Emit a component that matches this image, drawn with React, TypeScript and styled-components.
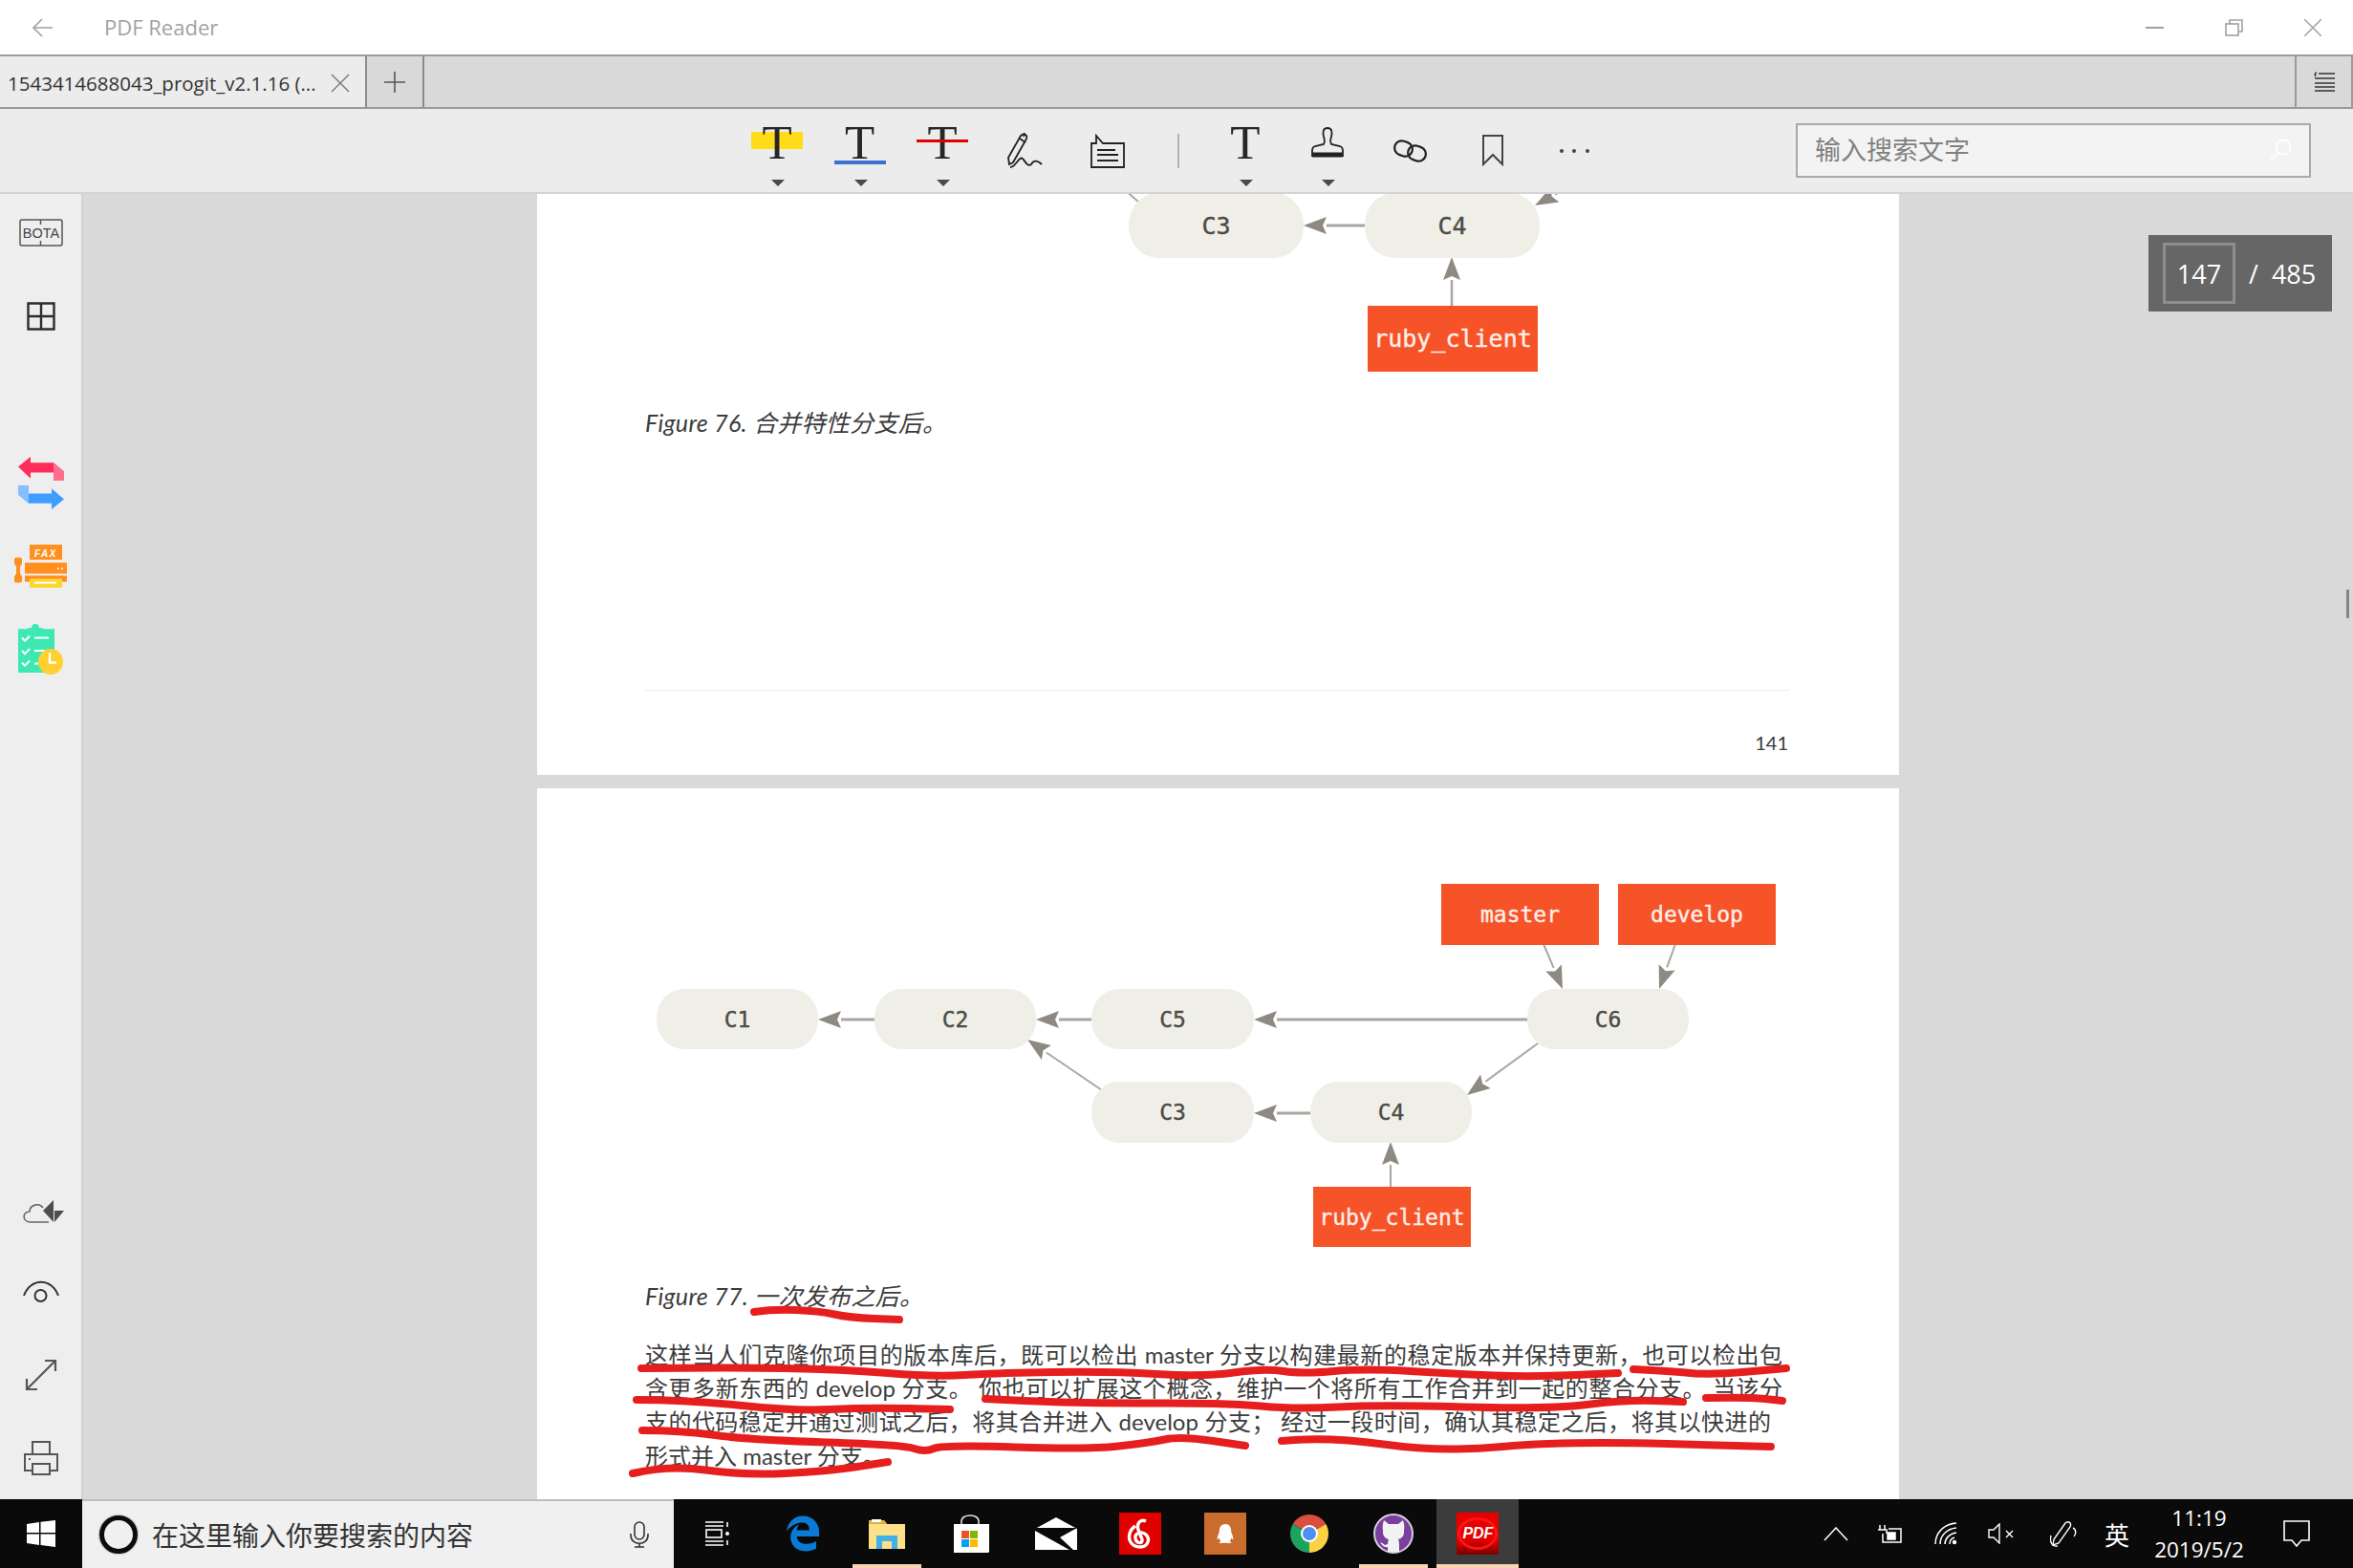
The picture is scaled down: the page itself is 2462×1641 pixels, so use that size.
import React from 'react';
import styled, { createGlobalStyle, css } from 'styled-components';
import { FaQq } from 'react-icons/fa';
import { FaEdgeLegacy } from 'react-icons/fa6';

const UI_FONT = '"Open Sans", "Noto Sans CJK SC", sans-serif';
const DOC_FONT = 'Lato, "Noto Sans CJK SC", sans-serif';

//Global
const GlobalStyle = createGlobalStyle`
    html, body {
        margin: 0;
        padding: 0;
        background: #d9d9d9;
        overflow: hidden;
    }
    * { box-sizing: border-box; }
`;

const Shell = styled.div`
    width: 2462px;
    height: 1641px;
    display: flex;
    flex-direction: column;
    font-family: ${UI_FONT};
    overflow: hidden;
`;

//Title bar
const TitleBar = styled.header`
    height: 57px;
    flex: none;
    background: #fff;
    display: flex;
    align-items: center;
    padding: 0 33px;
    color: #a2a2a2;
`;

const AppTitle = styled.span`
    margin-left: 54px;
    margin-bottom: 2px;
    font-size: 22px;
`;

const WindowButtons = styled.div`
    margin-left: auto;
    display: flex;
    gap: 64px;
    align-items: center;
`;

//Tabs
const TabBar = styled.div`
    height: 57px;
    flex: none;
    background: #d9d9d9;
    border-top: 2px solid #9a9a9a;
    border-bottom: 2px solid #9a9a9a;
    display: flex;
`;

const Tab = styled.div`
    width: 384px;
    background: #ececec;
    border-right: 2px solid #8c8c8c;
    display: flex;
    align-items: center;
    justify-content: space-between;
    padding: 2px 16px 0 8px;
    font-size: 20.5px;
    color: #333;
    white-space: nowrap;
`;

const AddTab = styled.div`
    width: 60px;
    border-right: 2px solid #8c8c8c;
    display: flex;
    align-items: center;
    justify-content: center;
`;

const TabMenu = styled.div`
    margin-left: auto;
    width: 61px;
    border-left: 2px solid #9a9a9a;
    border-right: 2px solid #9a9a9a;
    display: flex;
    align-items: center;
    justify-content: center;
`;

//Toolbar
const Toolbar = styled.div`
    height: 89px;
    flex: none;
    background: #ececec;
    border-bottom: 2px solid #d4d4d4;
    display: flex;
    align-items: center;
    padding-left: 770px;
    padding-right: 44px;
`;

const ToolItem = styled.div`
    width: 86.4px;
    height: 87px;
    flex: none;
    position: relative;
    display: flex;
    align-items: center;
    justify-content: center;
`;

const Caret = styled.i`
    position: absolute;
    bottom: 6px;
    left: 50%;
    margin-left: -6px;
    border-left: 7px solid transparent;
    border-right: 7px solid transparent;
    border-top: 7px solid #4a4a4a;
`;

type Mark = 'yellow' | 'blue' | 'red';

const markStyles = {
    yellow: css`top: 14px; height: 18px; background: #ffdc17; z-index: -1;`,
    blue: css`top: 44px; height: 4px; background: #3a70d0;`,
    red: css`top: 22px; height: 3px; background: #e00000;`,
};

const TextTool = styled.span<{ $mark?: Mark }>`
    position: relative;
    z-index: 0;
    width: 54px;
    height: 51px;
    margin-bottom: 16px;
    font-family: "Liberation Serif", serif;
    font-size: 51px;
    line-height: 51px;
    text-align: center;
    color: #262626;
    &::after {
        content: '';
        position: absolute;
        left: 0;
        right: 0;
        ${p => p.$mark && markStyles[p.$mark]}
    }
`;

const LiftedIcon = styled.span`
    display: flex;
    margin-bottom: 16px;
`;

const ToolDivider = styled.div`
    width: 2px;
    height: 36px;
    flex: none;
    margin: 0 25.6px 0 30px;
    background: #b0b0b0;
`;

const SearchBox = styled.label`
    margin-left: auto;
    width: 539px;
    height: 57px;
    flex: none;
    background: #f3f3f3;
    border: 2px solid #a9a9a9;
    display: flex;
    align-items: center;
    padding: 0 18px 3px;
`;

const SearchInput = styled.input`
    flex: 1;
    min-width: 0;
    border: 0;
    outline: 0;
    background: transparent;
    font-family: ${UI_FONT};
    font-size: 27px;
    padding: 0;
    &::placeholder { color: #808080; opacity: 1; }
`;

//Body of the window
const Main = styled.div`
    flex: 1;
    min-height: 0;
    display: flex;
`;

const Sidebar = styled.nav`
    width: 87px;
    flex: none;
    background: #eee;
    border-right: 2px solid #d2d2d2;
    display: flex;
    flex-direction: column;
`;

const SideGroup = styled.div<{ $gap?: number; $bottom?: boolean }>`
    display: flex;
    flex-direction: column;
    margin-top: ${p => (p.$bottom ? 'auto' : `${p.$gap ?? 0}px`)};
`;

const SideItem = styled.div<{ $h: number; $shift?: number }>`
    height: ${p => p.$h}px;
    padding-left: ${p => p.$shift ?? 0}px;
    display: flex;
    align-items: center;
    justify-content: center;
`;

const Canvas = styled.main`
    flex: 1;
    min-width: 0;
    position: relative;
    overflow: hidden;
    background: #d9d9d9;
    padding-left: 475px;
    display: flex;
    flex-direction: column;
    gap: 14px;
`;

const Page = styled.section<{ $h: number }>`
    width: 1425px;
    height: ${p => p.$h}px;
    flex: none;
    position: relative;
    background: #fff;
    display: flex;
    flex-direction: column;
    padding: 0 114px 0 113px;
    color: #3c3c3c;
    font-family: ${DOC_FONT};
`;

const Figure = styled.svg<{ $h: number }>`
    display: block;
    width: 1425px;
    height: ${p => p.$h}px;
    margin-left: -113px;
    flex: none;
`;

const Caption = styled.p<{ $top: number }>`
    margin: ${p => p.$top}px 0 0;
    font-size: 25px;
    letter-spacing: 0.3px;
    line-height: 32px;
    font-style: italic;
    white-space: nowrap;
`;

const PageFooter = styled.footer`
    margin-top: auto;
    height: 89px;
    border-top: 1px solid #ececec;
    padding-top: 40px;
    text-align: right;
    font-size: 20px;
    line-height: 28px;
    padding-right: 2px;
`;

const Paragraph = styled.div`
    margin-top: 28px;
    font-size: 24px;
    line-height: 35.2px;
`;

const TextLine = styled.div<{ $fit?: boolean; $inset?: number }>`
    white-space: nowrap;
    margin-right: ${p => p.$inset ?? 0}px;
    ${p => p.$fit && css`
        white-space: normal;
        text-align: justify;
        text-align-last: justify;
    `}
`;

const Ink = styled.svg`
    position: absolute;
    left: 0;
    top: 0;
    width: 1425px;
    height: 744px;
    pointer-events: none;
`;

const NodeLabel = styled.text<{ $size: number; $light?: boolean }>`
    font-family: "DejaVu Sans Mono", monospace;
    font-size: ${p => p.$size}px;
    fill: ${p => (p.$light ? '#fdeee8' : '#4c4b45')};
    stroke: ${p => (p.$light ? '#fdeee8' : '#4c4b45')};
    stroke-width: 0.4px;
    text-anchor: middle;
    dominant-baseline: central;
`;

//Page counter
const PageCounter = styled.div`
    position: absolute;
    right: 22px;
    top: 43px;
    width: 192px;
    height: 80px;
    background: #666;
    color: #fff;
    display: flex;
    align-items: center;
    padding-left: 15px;
    font-size: 27px;
`;

const PageInput = styled.div`
    width: 76px;
    height: 64px;
    border: 3px solid #8e8e8e;
    display: flex;
    align-items: center;
    justify-content: center;
`;

const PageTotal = styled.span`
    margin-left: 14px;
    white-space: pre;
`;

const ScrollThumb = styled.div`
    position: absolute;
    right: 4px;
    top: 414px;
    width: 3px;
    height: 30px;
    background: #858585;
`;

//Taskbar
const Taskbar = styled.footer`
    height: 72px;
    flex: none;
    background: #0a0a0a;
    display: flex;
    align-items: center;
    color: #fff;
`;

const StartButton = styled.div`
    width: 86px;
    height: 72px;
    flex: none;
    display: flex;
    align-items: center;
    justify-content: center;
`;

const SearchField = styled.div`
    width: 619px;
    height: 72px;
    flex: none;
    background: #f0f0f0;
    border-top: 2px solid #bdbdbd;
    display: flex;
    align-items: center;
    padding: 0 25px 0 18px;
    color: #333;
    font-size: 28px;
    font-family: "Noto Sans CJK SC", sans-serif;
`;

const Ring = styled.i`
    width: 40px;
    height: 40px;
    border: 5px solid #0c0c0c;
    border-radius: 50%;
    box-shadow: 0 0 2px #666;
    margin-right: 15px;
`;

const MicSlot = styled.span`
    margin-left: auto;
    display: flex;
`;

const TaskView = styled.div`
    width: 91px;
    height: 72px;
    flex: none;
    display: flex;
    align-items: center;
    justify-content: center;
`;

const TaskSlot = styled.div<{ $open?: boolean; $active?: boolean }>`
    width: 86px;
    height: 72px;
    margin: 0 1.15px;
    flex: none;
    position: relative;
    display: flex;
    align-items: center;
    justify-content: center;
    background: ${p => (p.$active ? '#3c3c3c' : 'transparent')};
    ${p => p.$open && css`
        &::after {
            content: '';
            position: absolute;
            bottom: 0;
            left: ${p.$active ? 0 : 7}px;
            right: ${p.$active ? 0 : 7}px;
            height: 4px;
            background: #fcd3b4;
        }
    `}
`;

const SquareTile = styled.div<{ $bg: string }>`
    width: 44px;
    height: 44px;
    background: ${p => p.$bg};
    display: flex;
    align-items: center;
    justify-content: center;
    color: #fff;
`;

const PdfTile = styled.div`
    width: 44px;
    height: 44px;
    background: linear-gradient(#e80000 62%, #7a0000);
    display: flex;
    align-items: center;
    justify-content: center;
    color: #fff;
    font-family: "Liberation Sans", sans-serif;
    font-weight: 700;
    font-style: italic;
    font-size: 16px;
    position: relative;
    &::before {
        content: '';
        position: absolute;
        left: 1px;
        right: 1px;
        top: 5px;
        bottom: 5px;
        border: 3px solid #ff1414;
        border-radius: 50%;
    }
`;

const PdfLabel = styled.span`
    position: relative;
`;

const Tray = styled.div`
    margin-left: auto;
    display: flex;
    align-items: center;
    padding-right: 26px;
`;

const TrayItem = styled.div<{ $w: number }>`
    width: ${p => p.$w}px;
    height: 72px;
    display: flex;
    flex-direction: column;
    align-items: center;
    justify-content: center;
    font-family: "Noto Sans CJK SC", sans-serif;
    font-size: 26px;
`;

const Clock = styled.div`
    display: flex;
    flex-direction: column;
    align-items: center;
    font-family: ${UI_FONT};
    font-size: 22.5px;
    line-height: 33px;
    white-space: nowrap;
`;

//Data
type Point = [number, number];
type Box = { label: string; x: number; y: number; w: number; h: number };
type Link = { from: Point; to: Point; width: number };

const smoothPath = (pts: Point[]) => {
    let d = `M${pts[0][0]} ${pts[0][1]}`;
    for (let i = 1; i < pts.length - 1; i++) {
        const mx = (pts[i][0] + pts[i + 1][0]) / 2;
        const my = (pts[i][1] + pts[i + 1][1]) / 2;
        d += ` Q${pts[i][0]} ${pts[i][1]} ${mx} ${my}`;
    }
    const last = pts[pts.length - 1];
    return `${d} L${last[0]} ${last[1]}`;
};

const inkStrokes: Point[][] = [
    [[789, 1373], [809, 1370], [857, 1372], [889, 1379], [941, 1381]],
    [[671, 1432], [761, 1431], [881, 1433], [977, 1441], [1042, 1437], [1162, 1435], [1259, 1441], [1323, 1432], [1363, 1438], [1428, 1432], [1524, 1438], [1604, 1441], [1693, 1437]],
    [[1709, 1433], [1749, 1435], [1789, 1439], [1869, 1432]],
    [[666, 1465], [720, 1465], [833, 1477], [905, 1473], [994, 1475]],
    [[1031, 1464], [1122, 1469], [1283, 1468], [1355, 1475], [1444, 1470], [1620, 1475], [1701, 1465], [1761, 1467]],
    [[1785, 1463], [1829, 1462], [1865, 1466]],
    [[672, 1497], [712, 1497], [785, 1507], [945, 1512], [968, 1520], [986, 1512], [1138, 1517], [1202, 1510], [1235, 1503], [1303, 1513]],
    [[1341, 1508], [1387, 1503], [1508, 1520], [1636, 1508], [1853, 1514]],
    [[662, 1542], [700, 1533], [777, 1544], [865, 1540], [929, 1530]],
];

const topNodes: Box[] = [
    { label: 'C3', x: 1181, y: 202, w: 183, h: 68 },
    { label: 'C4', x: 1428, y: 202, w: 183, h: 68 },
];
const topTags: Box[] = [{ label: 'ruby_client', x: 1431, y: 320, w: 178, h: 69 }];
const topLinks: Link[] = [
    { from: [1428, 236], to: [1364, 236], width: 3 },
    { from: [1519, 320], to: [1519, 269], width: 2.5 },
    { from: [1192, 212], to: [1150, 175], width: 2 },
    { from: [1680, 175], to: [1606, 215], width: 2 },
];

const bottomNodes: Box[] = [
    { label: 'C1', x: 687, y: 1035, w: 169, h: 63 },
    { label: 'C2', x: 915, y: 1035, w: 169, h: 63 },
    { label: 'C5', x: 1142, y: 1035, w: 170, h: 63 },
    { label: 'C6', x: 1598, y: 1035, w: 169, h: 63 },
    { label: 'C3', x: 1142, y: 1132, w: 170, h: 64 },
    { label: 'C4', x: 1371, y: 1132, w: 169, h: 64 },
];
const bottomTags: Box[] = [
    { label: 'master', x: 1508, y: 925, w: 165, h: 64 },
    { label: 'develop', x: 1693, y: 925, w: 165, h: 64 },
    { label: 'ruby_client', x: 1374, y: 1242, w: 165, h: 63 },
];
const bottomLinks: Link[] = [
    { from: [915, 1067], to: [856, 1067], width: 3 },
    { from: [1142, 1067], to: [1084, 1067], width: 3 },
    { from: [1598, 1067], to: [1312, 1067], width: 3 },
    { from: [1371, 1165], to: [1312, 1165], width: 3 },
    { from: [1153, 1141], to: [1075, 1088], width: 2 },
    { from: [1609, 1092], to: [1535, 1146], width: 2 },
    { from: [1615, 988], to: [1635, 1035], width: 2 },
    { from: [1753, 988], to: [1736, 1035], width: 2 },
    { from: [1455, 1242], to: [1455, 1195], width: 2 },
];

const Arrow = ({ from, to, width }: Link) => {
    const dx = to[0] - from[0];
    const dy = to[1] - from[1];
    const len = Math.hypot(dx, dy);
    const ux = dx / len;
    const uy = dy / len;
    const bx = to[0] - ux * 24;
    const by = to[1] - uy * 24;
    const head = `${to[0]},${to[1]} ${bx - uy * 9},${by + ux * 9} ${bx + ux * 4},${by + uy * 4} ${bx + uy * 9},${by - ux * 9}`;
    return (
        <g>
            <line x1={from[0]} y1={from[1]} x2={bx} y2={by} stroke="#aaa69f" strokeWidth={width} />
            <polygon points={head} fill="#8e8a82" />
        </g>
    );
};

const Diagram = ({ nodes, tags, links, size, box, height }: { nodes: Box[]; tags: Box[]; links: Link[]; size: number; box: string; height: number }) => (
    <Figure $h={height} viewBox={box}>
        {links.map(l => <Arrow key={`${l.from}`} {...l} />)}
        {nodes.map(n => (
            <g key={n.label}>
                <rect x={n.x} y={n.y} width={n.w} height={n.h} rx={n.w * 0.17} ry={n.h * 0.48} fill="#efefe8" />
                <NodeLabel $size={size} x={n.x + n.w / 2} y={n.y + n.h / 2}>{n.label}</NodeLabel>
            </g>
        ))}
        {tags.map(t => (
            <g key={t.label}>
                <rect x={t.x} y={t.y} width={t.w} height={t.h} fill="#f65329" />
                <NodeLabel $light $size={size} x={t.x + t.w / 2} y={t.y + t.h / 2}>{t.label}</NodeLabel>
            </g>
        ))}
    </Figure>
);

//Icons
const Stroke = ({ w, h, box, color = '#222', width = 2, children }: { w: number; h: number; box?: string; color?: string; width?: number; children: React.ReactNode }) => (
    <svg width={w} height={h} viewBox={box ?? `0 0 ${w} ${h}`} fill="none" stroke={color} strokeWidth={width}>{children}</svg>
);

const PenIcon = () => (
    <Stroke w={38} h={38} width={1.8}>
        <path d="M3 33 L2 26 L15 3 Q18 0 21 3 Q22 5 20 8 L7 31 Z" />
        <path d="M14 6 L20 10 M19 0 L18 4" />
        <path d="M4 36 C10 36 13 24 17 27 C20 30 22 36 26 33 C28 29 32 28 37 33" />
    </Stroke>
);

const NoteIcon = () => (
    <Stroke w={38} h={36} width={1.8}>
        <path d="M2 10 H7 V2 L14 10 H36 V35 H2 Z" />
        <path d="M8 17 H27 M8 22 H30 M8 28 H30" />
    </Stroke>
);

const StampIcon = () => (
    <Stroke w={35} h={34} width={1.8}>
        <path d="M17 1 C12 1 12 6 13 10 C14 14 15 15 13 18 L4 20 Q1 21 1 25 L1 30 L33 30 L33 25 Q33 21 30 20 L21 18 C19 15 20 14 21 10 C22 6 22 1 17 1 Z" />
        <path d="M1 29 H33" strokeWidth={5} />
    </Stroke>
);

const LinkIcon = () => (
    <Stroke w={37} h={26} width={2.2}>
        <rect x="2" y="3" width="19" height="15" rx="7.5" transform="rotate(20 11.5 10.5)" />
        <rect x="16" y="8" width="19" height="15" rx="7.5" transform="rotate(20 25.5 15.5)" />
    </Stroke>
);

const BookmarkIcon = () => (
    <Stroke w={24} h={33} color="#444">
        <path d="M2 1 H22 V31 L12 21 L2 31 Z" />
    </Stroke>
);

const MoreIcon = () => (
    <svg width="34" height="4" fill="#444">
        <circle cx="3" cy="2" r="2" />
        <circle cx="16" cy="2" r="2" />
        <circle cx="30" cy="2" r="2" />
    </svg>
);

const BotaIcon = () => (
    <svg width="46" height="29" viewBox="0 0 46 29" fill="none" stroke="#555" strokeWidth="1.5">
        <rect x="1" y="1" width="44" height="27" rx="2" />
        <path d="M22.5 1 V6 M22.5 23 V28" />
        <text x="23" y="20" fontFamily="Liberation Sans, sans-serif" fontSize="14.5" textAnchor="middle" fill="#444" stroke="none">BOTA</text>
    </svg>
);

const SwapIcon = () => (
    <svg width="48" height="55" viewBox="20 469 48 53" preserveAspectRatio="none">
        <path d="M20 479 L33 469 V475 H57 L68 484 V493 H57 V485 H33 V491 Z" fill="#ff2d5a" />
        <path d="M57 475 L68 484 V493 H57 Z" fill="#ff6f8c" />
        <path d="M68 512 L55 522 V516 H31 L20 507 V498 H31 V506 H55 V501 Z" fill="#3f9dff" />
        <path d="M31 516 L20 507 V498 H31 Z" fill="#86bfff" />
    </svg>
);

const FaxIcon = () => (
    <svg width="55" height="45" viewBox="16 559 55 43" preserveAspectRatio="none">
        <rect x="32" y="559" width="34" height="15" fill="#ff8f1f" />
        <text x="49" y="571" fontFamily="Liberation Sans, sans-serif" fontSize="10" fontWeight="700" fontStyle="italic" textAnchor="middle" letterSpacing="1.5" fill="#fff">FAX</text>
        <rect x="27" y="577" width="44" height="11" fill="#ff8f1f" />
        <rect x="27" y="590" width="44" height="6" fill="#ff8f1f" />
        <rect x="32" y="593" width="34" height="9" fill="#ffd52b" />
        <rect x="37" y="596" width="23" height="2" fill="#fff" />
        <path d="M61 582 h2 v2 h-2z M65 582 h2 v2 h-2z" fill="#ffe0b0" />
        <path d="M16 574 Q16 572 18 572 H22 Q24 572 24 574 V578 L22 581 V588 L24 591 V595 Q24 597 22 597 H18 Q16 597 16 595 V591 L18 588 V581 L16 578 Z" fill="#ff8f1f" />
    </svg>
);

const ChecklistIcon = () => (
    <svg width="47" height="54" viewBox="21 637 47 52" preserveAspectRatio="none">
        <rect x="21" y="643" width="38" height="44" fill="#3ee8b2" />
        <circle cx="39" cy="642" r="4" fill="#3ee8b2" />
        <rect x="31" y="642" width="16" height="5" fill="#3ee8b2" />
        <g stroke="#fff" strokeWidth="2" fill="none">
            <path d="M25 652 L28 655 L33 650 M25 665 L28 668 L33 663 M25 677 L28 680 L33 675" />
            <path d="M38 652 H53 M38 665 H49 M38 678 H42" />
        </g>
        <circle cx="55" cy="676" r="13" fill="#ffd02f" />
        <path d="M54 667 V677 H61" stroke="#fff" strokeWidth="2.4" fill="none" />
    </svg>
);

const CloudIcon = () => (
    <svg width="44" height="26" viewBox="0 0 44 26" fill="none">
        <path d="M27 24 H8 C-1 24 -1 13 7 13 C7 6 17 3 21 9" stroke="#666" strokeWidth="1.6" />
        <path d="M21 12 L32 1 V24 Z" fill="#4d4d4d" />
        <path d="M33 12 H43 L33 24 Z" fill="#4d4d4d" />
    </svg>
);

const EyeIcon = () => (
    <Stroke w={38} h={24} color="#333" width={2}>
        <path d="M1 16 C8 -3 30 -3 37 16" />
        <circle cx="18.5" cy="16" r="6" />
    </Stroke>
);

const ExpandIcon = () => (
    <Stroke w={34} h={34} color="#555" width={2.2}>
        <path d="M2 32 L32 2 M21 2 H32 V13 M2 21 V32 H13" />
    </Stroke>
);

const PrintIcon = () => (
    <Stroke w={38} h={36} color="#555" width={2}>
        <path d="M10 14 V1 H28 V14" />
        <path d="M10 31 H2 V14 H36 V31 H28" />
        <rect x="10" y="24" width="18" height="11" />
        <path d="M6 19 h2" />
    </Stroke>
);

const WindowsLogo = () => (
    <svg width="30" height="28" viewBox="0 0 30 28" fill="#fff">
        <path d="M0 4 L13 2 V13 H0 Z M14.5 1.8 L30 0 V13 H14.5 Z M0 14.5 H13 V26 L0 24 Z M14.5 14.5 H30 V28 L14.5 26 Z" />
    </svg>
);

const MicIcon = () => (
    <Stroke w={22} h={28} color="#333" width={1.6}>
        <rect x="6" y="1" width="10" height="18" rx="5" />
        <path d="M2 13 V15 C2 26 20 26 20 15 V13 M11 23 V27 M6 27 H16" />
    </Stroke>
);

const TaskViewIcon = () => (
    <Stroke w={28} h={26} color="#fff" width={1.6}>
        <path d="M1 1 H20 M1 25 H20 M1 5 H20 M1 21 H20" />
        <rect x="2" y="9" width="16" height="8" />
        <path d="M24 1 V6 M24 20 V25" />
        <circle cx="24" cy="13" r="2" fill="#fff" stroke="none" />
    </Stroke>
);

const FolderIcon = () => (
    <svg width="38" height="32" viewBox="0 0 38 32">
        <path d="M0 2 H16 L19 6 H38 V32 H0 Z" fill="#ffe08a" />
        <path d="M0 2 H16 L19 6 H0 Z" fill="#e0b040" />
        <rect x="3" y="1" width="10" height="3" fill="#fff" />
        <path d="M8 32 V18 H30 V32 H24 V24 H14 V32 Z" fill="#3fb0e8" />
    </svg>
);

const StoreIcon = () => (
    <svg width="38" height="40" viewBox="0 0 38 40">
        <path d="M8 12 V7 C8 -1 26 -1 26 7 V12" fill="none" stroke="#ddd" strokeWidth="1.6" />
        <path d="M0 10 H37 V39 L36 40 H0 Z" fill="#fff" />
        <rect x="8" y="17" width="8" height="8" fill="#f25022" />
        <rect x="17" y="17" width="8" height="8" fill="#7fba00" />
        <rect x="8" y="26" width="8" height="8" fill="#00a4ef" />
        <rect x="17" y="26" width="8" height="8" fill="#ffb900" />
    </svg>
);

const MailIcon = () => (
    <svg width="44" height="34" viewBox="0 0 44 34">
        <path d="M0 12 L22 0 L44 12 V34 H0 Z" fill="#fff" />
        <path d="M0 11 H44 L26 21 L40 34 H36 L0 14 Z" fill="#0a0a0a" />
        <path d="M4 11 L22 2 L40 11 Z" fill="#fff" />
    </svg>
);

const NeteaseIcon = () => (
    <svg width="44" height="44" viewBox="0 0 44 44" fill="none" stroke="#fff" strokeWidth="3.4">
        <path d="M28 9 C22 6 18 12 20 18 L24 28 C25 33 18 33 17 27 C16 21 24 19 28 23 C33 28 30 36 22 36 C14 36 9 30 11 22 C12 18 14 16 17 14" />
    </svg>
);

const ChromeIcon = () => (
    <svg width="40" height="40" viewBox="-20 -20 40 40">
        <path d="M0 0 L-17.3 -10 A20 20 0 0 1 17.3 -10 Z" fill="#db4f3f" />
        <path d="M0 0 L17.3 -10 A20 20 0 0 1 0 20 Z" fill="#fdd144" />
        <path d="M0 0 L0 20 A20 20 0 0 1 -17.3 -10 Z" fill="#1da260" />
        <circle r="9" fill="#fff" />
        <circle r="7" fill="#4f8ff0" />
    </svg>
);

const GithubIcon = () => (
    <svg width="42" height="42" viewBox="0 0 42 42">
        <circle cx="21" cy="21" r="20" fill="#7b3fa0" stroke="#d8d0dc" strokeWidth="2" />
        <path d="M11 7 L16 11 H26 L31 7 Q33 13 32 17 Q33 25 26 27 Q27 29 27 32 V40 H15 V35 Q10 36 7 30 Q10 31 12 33 L15 32 Q15 29 16 27 Q9 25 10 17 Q9 13 11 7 Z" fill="#f2f2f2" />
    </svg>
);

const CaretUp = () => (
    <Stroke w={26} h={15} color="#fff" width={1.5}>
        <path d="M1 14 L13 1 L25 14" />
    </Stroke>
);

const PowerIcon = () => (
    <Stroke w={26} h={20} color="#fff" width={1.5}>
        <path d="M3 1 V6 M8 1 V6 M1 6 H10 V10 M6 10 V19 H25 V5 H12" />
        <rect x="11" y="9" width="8" height="7" fill="#fff" />
    </Stroke>
);

const WifiIcon = () => (
    <Stroke w={24} h={24} color="#fff" width={1.5}>
        <path d="M1 23 C1 11 10 2 23 1 M6 23 C6 14 13 7 23 6 M11 23 C11 17 16 12 23 11 M16 23 C16 20 18 17 21 16" />
        <circle cx="21" cy="21" r="2.2" fill="#fff" stroke="none" />
    </Stroke>
);

const MuteIcon = () => (
    <Stroke w={28} h={22} color="#fff" width={1.4}>
        <path d="M1 7 H6 L12 1 V21 L6 15 H1 Z" />
        <path d="M19 8 L26 15 M26 8 L19 15" />
    </Stroke>
);

const InkPenIcon = () => (
    <Stroke w={28} h={28} color="#fff" width={1.4}>
        <path d="M3 26 L4 20 L16 3 C19 0 23 3 21 7 L9 24 Z" />
        <path d="M1 16 C-1 24 3 28 8 27 M24 8 C28 10 27 15 25 17" />
    </Stroke>
);

const NotifyIcon = () => (
    <Stroke w={28} h={28} color="#fff" width={1.6}>
        <path d="M1 1 H27 V21 H19 L14 27 L9 21 H1 Z" />
    </Stroke>
);

export default function App() {
    return (
        <Shell>
            <GlobalStyle />

            <TitleBar>
                <Stroke w={22} h={20} color="#a0a0a0" width={1.6}>
                    <path d="M22 10 H2 M11 1 L2 10 L11 19" />
                </Stroke>
                <AppTitle>PDF Reader</AppTitle>
                <WindowButtons>
                    <Stroke w={19} h={2} color="#a0a0a0"><path d="M0 1 H19" /></Stroke>
                    <Stroke w={19} h={18} color="#a0a0a0" width={1.6}>
                        <rect x="1" y="5" width="13" height="12" />
                        <path d="M5 5 V1 H18 V13 H14" />
                    </Stroke>
                    <Stroke w={18} h={18} color="#a0a0a0" width={1.5}><path d="M0 0 L18 18 M18 0 L0 18" /></Stroke>
                </WindowButtons>
            </TitleBar>

            <TabBar>
                <Tab>
                    <span>1543414688043_progit_v2.1.16 (...</span>
                    <Stroke w={20} h={20} color="#777" width={1.4}><path d="M1 1 L19 19 M19 1 L1 19" /></Stroke>
                </Tab>
                <AddTab>
                    <Stroke w={22} h={22} color="#555" width={1.6}><path d="M11 0 V22 M0 11 H22" /></Stroke>
                </AddTab>
                <TabMenu>
                    <Stroke w={22} h={21} color="#333" width={1.5}>
                        <path d="M5 2 H22 M1 7 H22 M1 12 H22 M1 16 H22 M1 20 H22" />
                        <path d="M3 1 Q0 2 2 5" />
                    </Stroke>
                </TabMenu>
            </TabBar>

            <Toolbar>
                <ToolItem><TextTool $mark="yellow">T</TextTool><Caret /></ToolItem>
                <ToolItem><TextTool $mark="blue">T</TextTool><Caret /></ToolItem>
                <ToolItem><TextTool $mark="red">T</TextTool><Caret /></ToolItem>
                <ToolItem><PenIcon /></ToolItem>
                <ToolItem><NoteIcon /></ToolItem>
                <ToolDivider />
                <ToolItem><TextTool>T</TextTool><Caret /></ToolItem>
                <ToolItem><LiftedIcon><StampIcon /></LiftedIcon><Caret /></ToolItem>
                <ToolItem><LinkIcon /></ToolItem>
                <ToolItem><BookmarkIcon /></ToolItem>
                <ToolItem><MoreIcon /></ToolItem>
                <SearchBox>
                    <SearchInput placeholder="输入搜索文字" readOnly />
                    <Stroke w={23} h={23} color="#fff" width={1.8}>
                        <circle cx="14" cy="9" r="7.5" />
                        <path d="M9 15 L1 22" />
                    </Stroke>
                </SearchBox>
            </Toolbar>

            <Main>
                <Sidebar>
                    <SideGroup>
                        <SideItem $h={80}><BotaIcon /></SideItem>
                        <SideItem $h={96}><Stroke w={30} h={30} color="#2c2c2c" width={2.4}><path d="M1.5 1.5 H28.5 V28.5 H1.5 Z M15 1.5 V28.5 M1.5 15 H28.5" /></Stroke></SideItem>
                    </SideGroup>
                    <SideGroup $gap={83}>
                        <SideItem $h={86}><SwapIcon /></SideItem>
                        <SideItem $h={88}><FaxIcon /></SideItem>
                        <SideItem $h={86}><ChecklistIcon /></SideItem>
                    </SideGroup>
                    <SideGroup $bottom>
                        <SideItem $h={82} $shift={6}><CloudIcon /></SideItem>
                        <SideItem $h={86}><EyeIcon /></SideItem>
                        <SideItem $h={88}><ExpandIcon /></SideItem>
                        <SideItem $h={86}><PrintIcon /></SideItem>
                    </SideGroup>
                </Sidebar>

                <Canvas>
                    <Page $h={608}>
                        <Diagram nodes={topNodes} tags={topTags} links={topLinks} size={25} box="562 203 1425 198" height={198} />
                        <Caption $top={25}>Figure 76. 合并特性分支后。</Caption>
                        <PageFooter>141</PageFooter>
                    </Page>

                    <Page $h={744}>
                        <Diagram nodes={bottomNodes} tags={bottomTags} links={bottomLinks} size={23} box="562 825 1425 495" height={495} />
                        <Caption $top={20}>Figure 77. 一次发布之后。</Caption>
                        <Paragraph>
                            <TextLine $fit $inset={8}>这样当人们克隆你项目的版本库后，既可以检出 master 分支以构建最新的稳定版本并保持更新，也可以检出包</TextLine>
                            <TextLine $fit $inset={8}>含更多新东西的 develop 分支。 你也可以扩展这个概念，维护一个将所有工作合并到一起的整合分支。 当该分</TextLine>
                            <TextLine $fit $inset={20}>支的代码稳定并通过测试之后，将其合并进入 develop 分支； 经过一段时间，确认其稳定之后，将其以快进的</TextLine>
                            <TextLine>形式并入 master 分支。</TextLine>
                        </Paragraph>
                        <Ink viewBox="562 825 1425 744" fill="none" stroke="#e61e1e" strokeWidth="8" strokeLinecap="round" strokeLinejoin="round">
                            {inkStrokes.map(s => <path key={`${s[0]}`} d={smoothPath(s)} />)}
                        </Ink>
                    </Page>

                    <PageCounter>
                        <PageInput>147</PageInput>
                        <PageTotal>/  485</PageTotal>
                    </PageCounter>
                    <ScrollThumb />
                </Canvas>
            </Main>

            <Taskbar>
                <StartButton><WindowsLogo /></StartButton>
                <SearchField>
                    <Ring />
                    在这里输入你要搜索的内容
                    <MicSlot><MicIcon /></MicSlot>
                </SearchField>
                <TaskView><TaskViewIcon /></TaskView>
                <TaskSlot><FaEdgeLegacy size={38} color="#0a7ad6" /></TaskSlot>
                <TaskSlot $open><FolderIcon /></TaskSlot>
                <TaskSlot><StoreIcon /></TaskSlot>
                <TaskSlot><MailIcon /></TaskSlot>
                <TaskSlot><SquareTile $bg="#e00000"><NeteaseIcon /></SquareTile></TaskSlot>
                <TaskSlot><SquareTile $bg="#c96c2c"><FaQq size={20} /></SquareTile></TaskSlot>
                <TaskSlot><ChromeIcon /></TaskSlot>
                <TaskSlot $open><GithubIcon /></TaskSlot>
                <TaskSlot $open $active><PdfTile><PdfLabel>PDF</PdfLabel></PdfTile></TaskSlot>
                <Tray>
                    <TrayItem $w={58}><CaretUp /></TrayItem>
                    <TrayItem $w={54}><PowerIcon /></TrayItem>
                    <TrayItem $w={64}><WifiIcon /></TrayItem>
                    <TrayItem $w={52}><MuteIcon /></TrayItem>
                    <TrayItem $w={78}><InkPenIcon /></TrayItem>
                    <TrayItem $w={34}>英</TrayItem>
                    <TrayItem $w={138}>
                        <Clock>
                            <span>11:19</span>
                            <span>2019/5/2</span>
                        </Clock>
                    </TrayItem>
                    <TrayItem $w={66}><NotifyIcon /></TrayItem>
                </Tray>
            </Taskbar>
        </Shell>
    );
}
